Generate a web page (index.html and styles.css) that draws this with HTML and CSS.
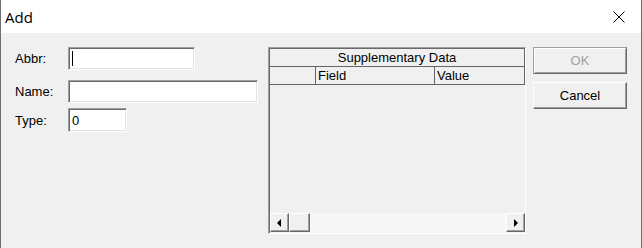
FILE: index.html
```html
<!DOCTYPE html>
<html lang="en">
<head>
    <meta charset="UTF-8">
    <title>Add</title>
    <link rel="stylesheet" href="styles.css">
</head>
<body>
    <div class="window">
        <div class="titlebar">
            <span class="title">Add</span>
            <svg class="close" width="12" height="12" viewBox="0 0 12 12">
                <path d="M0.5 0.5 L11.5 11.5 M11.5 0.5 L0.5 11.5" stroke="#000" stroke-width="1" fill="none"/>
            </svg>
        </div>
        <div class="client">
            <div class="fields">
                <div class="row row-abbr">
                    <label for="abbr">Abbr:</label>
                    <div class="field-wrap">
                        <input type="text" id="abbr" class="field field-abbr">
                        <span class="caret"></span>
                    </div>
                </div>
                <div class="row row-name">
                    <label for="name">Name:</label>
                    <input type="text" id="name" class="field field-name">
                </div>
                <div class="row row-type">
                    <label for="type">Type:</label>
                    <input type="text" id="type" class="field field-type" value="0">
                </div>
            </div>

            <div class="grid-box">
                <div class="grid-caption">Supplementary Data</div>
                <div class="grid-head">
                    <div class="col col-sel"></div>
                    <div class="col col-field">Field</div>
                    <div class="col col-value">Value</div>
                </div>
                <div class="grid-body"></div>
                <div class="hscroll">
                    <div class="sb-btn">
                        <svg width="5" height="8" viewBox="0 0 5 8"><path d="M4 0 L0 4 L4 8 Z" fill="#000"/></svg>
                    </div>
                    <div class="sb-thumb"></div>
                    <div class="sb-track"></div>
                    <div class="sb-btn">
                        <svg width="5" height="8" viewBox="0 0 5 8"><path d="M1 0 L5 4 L1 8 Z" fill="#000"/></svg>
                    </div>
                </div>
            </div>

            <div class="buttons">
                <button class="btn btn-ok" disabled>OK</button>
                <button class="btn">Cancel</button>
            </div>
        </div>
    </div>
</body>
</html>
```

FILE: styles.css
```css
html, body {
    margin: 0;
    padding: 0;
    background-color: #f0f0f0;
}
body {
    font-family: "Liberation Sans", Arial, sans-serif;
    font-size: 13px;
    color: #000;
}
.window {
    width: 642px;
    height: 248px;
    box-sizing: border-box;
    border-left: 1px solid #6e6e6e;
    border-right: 1px solid #6e6e6e;
    display: flex;
    flex-direction: column;
}
.titlebar {
    height: 33px;
    background-color: #fff;
    display: flex;
    align-items: center;
    justify-content: space-between;
    padding: 0 16px 0 4px;
}
.title {
    font-family: "Open Sans", "Noto Sans", sans-serif;
    font-size: 15px;
    color: #000;
}
.close {
    display: block;
}
.client {
    flex: 1;
    background-color: #f0f0f0;
    display: flex;
    padding-top: 14px;
}

/* left column */
.fields {
    width: 243px;
    padding-left: 14px;
}
.row {
    display: flex;
    align-items: center;
}
.row label {
    width: 53px;
    flex: none;
}
.row-name {
    margin-top: 10px;
}
.row-type {
    margin-top: 5px;
}
.field {
    box-sizing: border-box;
    height: 23px;
    margin: 0;
    padding: 0 0 0 3px;
    font-family: "Liberation Sans", Arial, sans-serif;
    font-size: 13px;
    background-color: #fff;
    border: 1px solid;
    border-color: #a0a0a0 #fff #fff #a0a0a0;
    box-shadow: inset 1px 1px 0 #696969, inset -1px -1px 0 #e3e3e3;
    outline: none;
}
.field-wrap {
    position: relative;
}
.field-abbr {
    display: block;
    width: 127px;
}
.caret {
    position: absolute;
    left: 4px;
    top: 4px;
    width: 1px;
    height: 15px;
    background-color: #000;
}
.field-name {
    width: 191px;
}
.field-type {
    width: 59px;
    height: 24px;
}

/* supplementary data grid */
.grid-box {
    width: 258px;
    height: 187px;
    box-sizing: border-box;
    margin-left: 10px;
    border: 1px solid;
    border-color: #a0a0a0 #fff #fff #a0a0a0;
    box-shadow: inset 1px 1px 0 #696969;
    padding: 1px 0 0 1px;
    display: flex;
    flex-direction: column;
}
.grid-caption {
    height: 17px;
    line-height: 17px;
    text-align: center;
    border-bottom: 1px solid #646464;
    border-right: 1px solid #646464;
}
.grid-head {
    display: flex;
    height: 17px;
    line-height: 17px;
    border-bottom: 1px solid #646464;
}
.col {
    box-sizing: border-box;
    border-right: 1px solid #646464;
    padding-left: 2px;
}
.col-sel {
    width: 46px;
}
.col-field {
    width: 119px;
}
.col-value {
    flex: 1;
}
.grid-body {
    flex: 1;
}
.hscroll {
    display: flex;
    height: 19px;
    margin-bottom: 1px;
}
.sb-btn, .sb-thumb {
    box-sizing: border-box;
    height: 19px;
    background-color: #f0f0f0;
    border: 1px solid;
    border-color: #fff #696969 #696969 #fff;
    box-shadow: inset -1px -1px 0 #a0a0a0;
}
.sb-btn {
    width: 19px;
    display: flex;
    align-items: center;
    justify-content: center;
}
.sb-btn svg {
    display: block;
}
.sb-thumb {
    width: 21px;
}
.sb-track {
    flex: 1;
    background-color: #f7f7f7;
}

/* buttons */
.buttons {
    margin-left: 7px;
    display: flex;
    flex-direction: column;
    gap: 8px;
}
.btn {
    width: 94px;
    height: 27px;
    box-sizing: border-box;
    margin: 0;
    padding: 0;
    font-family: "Liberation Sans", Arial, sans-serif;
    font-size: 13px;
    color: #000;
    background-color: #f0f0f0;
    border: 1px solid;
    border-color: #fff #696969 #696969 #fff;
    box-shadow: inset -1px -1px 0 #a0a0a0;
}
.btn-ok {
    color: #a0a0a0;
    border-color: #a0a0a0 #696969 #696969 #a0a0a0;
    box-shadow: inset 1px 1px 0 #fff, inset -1px -1px 0 #a0a0a0;
}
```
